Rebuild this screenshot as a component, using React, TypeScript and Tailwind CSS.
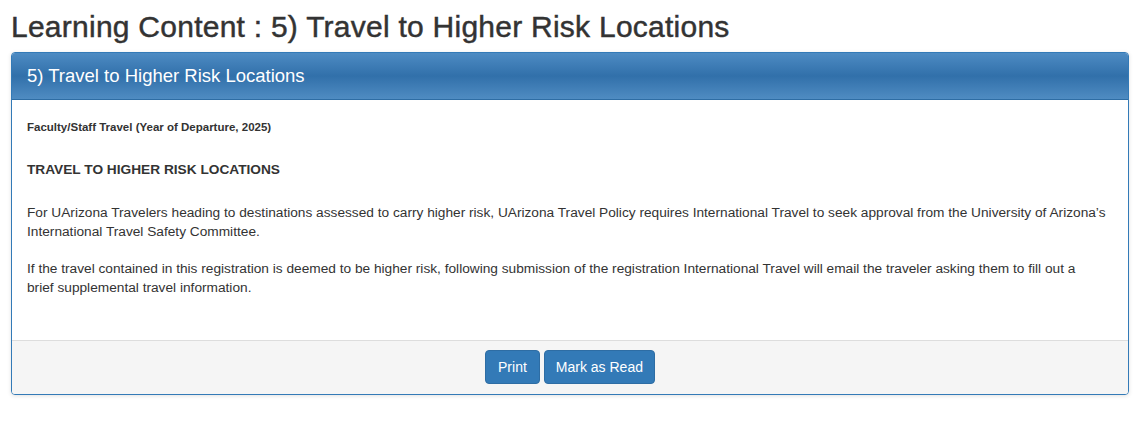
export default function App() {
  return (
    <div className="min-h-[429px] bg-white px-[11px] pt-[9px] text-[#333] font-['Liberation_Sans',Arial,sans-serif]">
      {/* page title */}
      <h1 className="text-[30px] leading-[36px] tracking-[0.25px] [-webkit-text-stroke:0.45px_#333]">
        Learning Content : 5) Travel to Higher Risk Locations
      </h1>

      {/* panel */}
      <div className="mt-[7px] rounded-[4px] border border-[#337ab7] bg-white shadow-[0_1px_4px_rgba(0,0,0,0.12)]">
        <div className="h-[47px] rounded-t-[3px] border-b border-[#2e6da4] bg-gradient-to-b from-[#4d8bc3] via-[#3170aa] to-[#4f8cc2] px-[15px] pt-[13px] text-[18.5px] leading-[20px] text-white">
          5) Travel to Higher Risk Locations
        </div>

        <div className="px-[15px] pt-[18px] pb-[43px] text-[13.7px] leading-[19px]">
          <p className="text-[11.5px] font-bold">Faculty/Staff Travel (Year of Departure, 2025)</p>
          <p className="mt-[23px] font-bold">TRAVEL TO HIGHER RISK LOCATIONS</p>
          <p className="mt-[24px]">
            For UArizona Travelers heading to destinations assessed to carry higher risk, UArizona Travel Policy requires International Travel to seek approval from the University of Arizona’s International Travel Safety Committee.
          </p>
          <p className="mt-[18px] pr-[12px]">
            If the travel contained in this registration is deemed to be higher risk, following submission of the registration International Travel will email the traveler asking them to fill out a brief supplemental travel information.
          </p>
        </div>

        <div className="flex justify-center gap-[4px] rounded-b-[3px] border-t border-[#ddd] bg-[#f5f5f5] pt-[9px] pb-[10px]">
          <button className="h-[34px] rounded-[4px] border border-[#2e6da4] bg-[#337ab7] px-[12px] text-[14px] text-white">
            Print
          </button>
          <button className="h-[34px] rounded-[4px] border border-[#2e6da4] bg-[#337ab7] px-[11px] text-[14px] text-white">
            Mark as Read
          </button>
        </div>
      </div>
    </div>
  );
}
